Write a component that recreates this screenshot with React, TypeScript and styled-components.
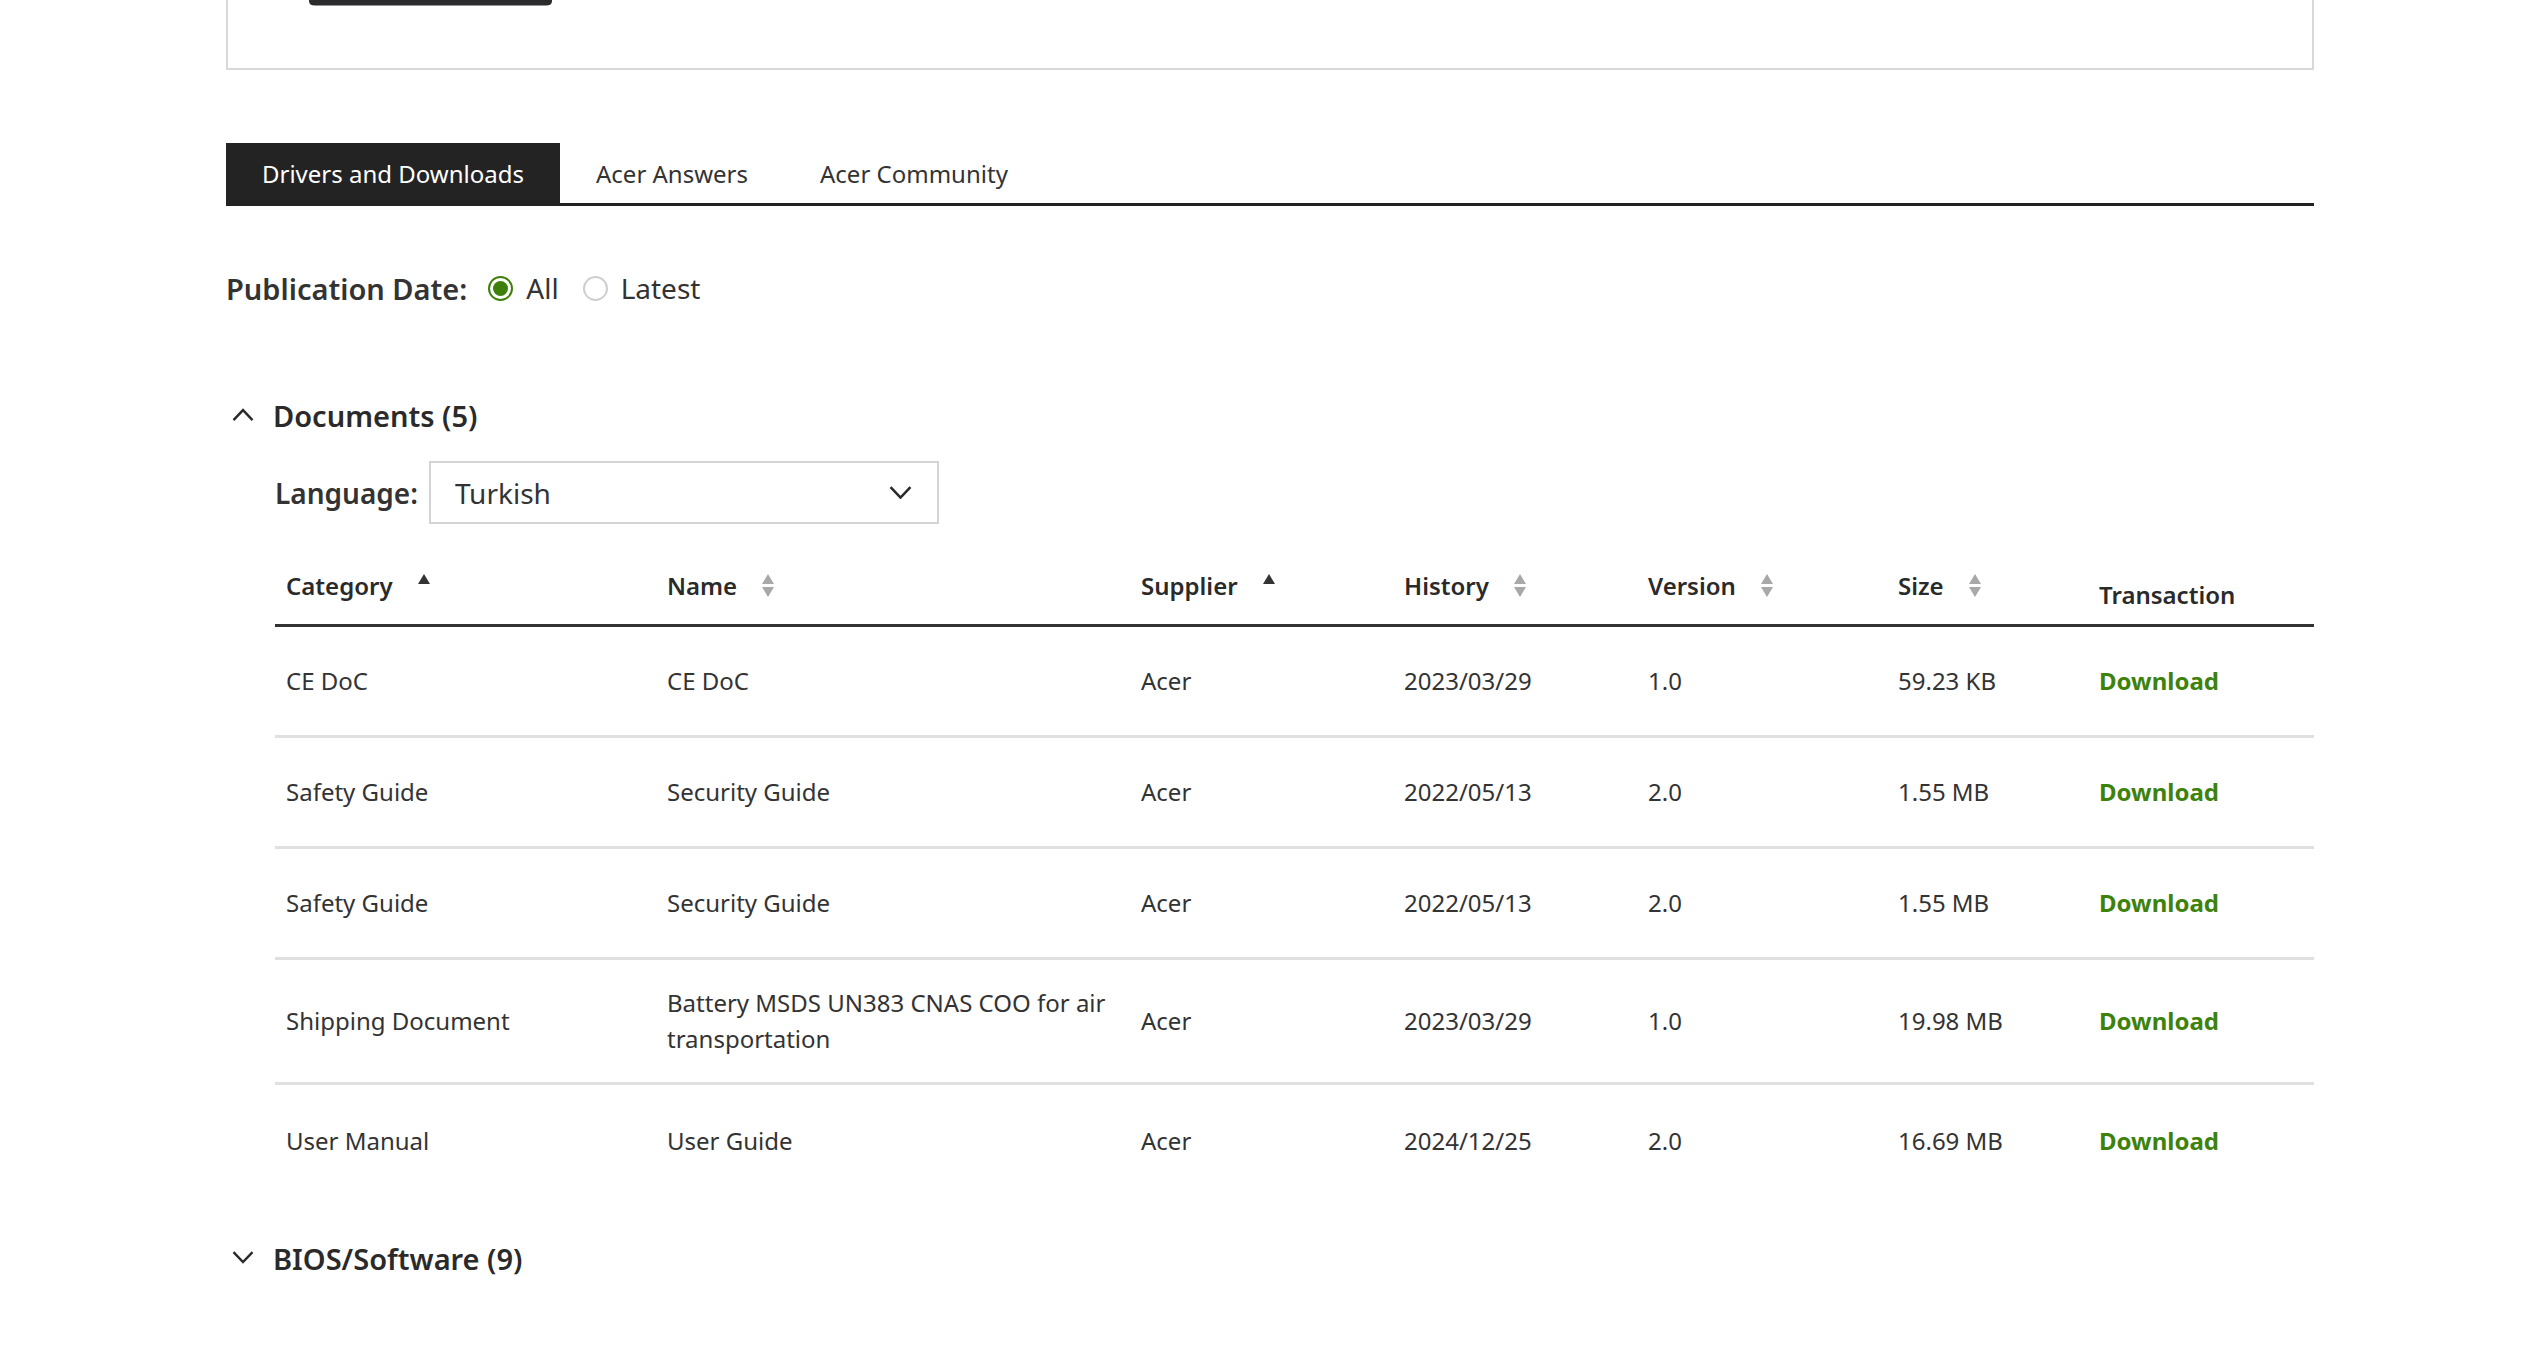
import React from "react";
import styled, { createGlobalStyle } from "styled-components";

const Global = createGlobalStyle`
  html, body { margin: 0; padding: 0; background: #fff; }
  body { font-family: "Noto Sans", "Open Sans", "Liberation Sans", sans-serif; color: #333; }
  * { box-sizing: border-box; }
`;

const Page = styled.div`
  width: 2088px;
  margin: 0 auto;
  padding-bottom: 60px;
`;

const ProductCard = styled.div`
  height: 70px;
  border: 2px solid #d9d9d9;
  border-top: none;
  padding-left: 81px;
  svg { display: block; }
`;

const Tabs = styled.div`
  display: flex;
  margin-top: 73px;
  border-bottom: 3px solid #222;
`;

const Tab = styled.div<{ $active?: boolean }>`
  height: 60px;
  padding: 0 36px;
  display: flex;
  align-items: center;
  font-size: 24px;
  background: ${(p) => (p.$active ? "#232323" : "transparent")};
  color: ${(p) => (p.$active ? "#fff" : "#333")};
`;

const FilterRow = styled.div`
  display: flex;
  align-items: center;
  height: 40px;
  margin-top: 62px;
`;

const FilterLabel = styled.span`
  font-size: 29px;
  font-weight: 600;
  margin-right: 21px;
`;

const RadioOption = styled.label`
  display: flex;
  align-items: center;
  font-size: 28px;
  margin-right: 24px;
`;

const RadioDot = styled.span<{ $checked?: boolean }>`
  width: 25px;
  height: 25px;
  border-radius: 50%;
  border: 2px solid ${(p) => (p.$checked ? "#3e7f0c" : "#cfcfcf")};
  display: inline-flex;
  align-items: center;
  justify-content: center;
  margin-right: 13px;
  &::after {
    content: "";
    width: 15px;
    height: 15px;
    border-radius: 50%;
    background: ${(p) => (p.$checked ? "#3e7f0c" : "transparent")};
  }
`;

const Section = styled.div<{ $gap: number }>`
  margin-top: ${(p) => p.$gap}px;
`;

const SectionHeader = styled.div`
  display: flex;
  align-items: center;
  height: 44px;
  gap: 19px;
  padding-left: 6px;
  font-size: 29px;
  font-weight: 600;
  color: #2a2a2a;
`;

const SectionBody = styled.div`
  padding-left: 49px;
`;

const LanguageRow = styled.div`
  display: flex;
  align-items: center;
  gap: 11px;
  margin-top: 24px;
`;

const LanguageLabel = styled.span`
  font-size: 28px;
  font-weight: 600;
`;

const Select = styled.div`
  width: 510px;
  height: 63px;
  border: 2px solid #d4d4d4;
  display: flex;
  align-items: center;
  justify-content: space-between;
  padding: 0 25px 0 24px;
  font-size: 28px;
`;

const Table = styled.div`
  margin-top: 23px;
`;

const cols = "381px 474px 263px 244px 250px 201px 225px";

const HeadRow = styled.div`
  display: grid;
  grid-template-columns: ${cols};
  height: 80px;
  border-bottom: 3px solid #333;
  align-items: end;
`;

const HeadCell = styled.div<{ $sortable?: boolean }>`
  display: flex;
  align-items: center;
  gap: 25px;
  padding: 0 11px ${(p) => (p.$sortable ? "22px" : "13px")};
  font-size: 24px;
  font-weight: 600;
  color: #2a2a2a;
`;

const Row = styled.div<{ $last?: boolean }>`
  display: grid;
  grid-template-columns: ${cols};
  min-height: 111px;
  align-items: center;
  border-bottom: ${(p) => (p.$last ? "none" : "3px solid #e0e0e0")};
`;

const Cell = styled.div`
  padding: 25px 11px;
  font-size: 24px;
  line-height: 36px;
  color: #333;
`;

const DownloadLink = styled.a`
  color: #3d820b;
  font-weight: 700;
  font-size: 24px;
  text-decoration: none;
  cursor: pointer;
`;

const SortWrap = styled.span`
  display: inline-flex;
  flex-direction: column;
  gap: 3px;
  width: 12px;
`;

type SortState = "asc" | "none";

const SortIcon = ({ state }: { state: SortState }) => (
  <SortWrap>
    <svg width="12" height="10" viewBox="0 0 12 10">
      <polygon points="6,0 12,10 0,10" fill={state === "asc" ? "#333" : "#a8a8a8"} />
    </svg>
    <svg width="12" height="10" viewBox="0 0 12 10">
      <polygon points="0,0 12,0 6,10" fill={state === "asc" ? "transparent" : "#a8a8a8"} />
    </svg>
  </SortWrap>
);

const Chevron = ({ up, size = 22 }: { up?: boolean; size?: number }) => (
  <svg width={size} height={size * 0.6} viewBox="0 0 22 13">
    <polyline
      points={up ? "1.5,12 11,2 20.5,12" : "1.5,1 11,11 20.5,1"}
      fill="none"
      stroke="#2a2a2a"
      strokeWidth="2.4"
    />
  </svg>
);

const LaptopBase = () => (
  <svg width="243" height="6" viewBox="0 0 243 6">
    <path d="M0 0 H243 V1 Q243 5.5 237 5.5 H6 Q0 5.5 0 1 Z" fill="#2b2b2e" />
  </svg>
);

const headers: { label: string; sort?: SortState }[] = [
  { label: "Category", sort: "asc" },
  { label: "Name", sort: "none" },
  { label: "Supplier", sort: "asc" },
  { label: "History", sort: "none" },
  { label: "Version", sort: "none" },
  { label: "Size", sort: "none" },
  { label: "Transaction" },
];

const rows = [
  ["CE DoC", "CE DoC", "Acer", "2023/03/29", "1.0", "59.23 KB"],
  ["Safety Guide", "Security Guide", "Acer", "2022/05/13", "2.0", "1.55 MB"],
  ["Safety Guide", "Security Guide", "Acer", "2022/05/13", "2.0", "1.55 MB"],
  ["Shipping Document", "Battery MSDS UN383 CNAS COO for air transportation", "Acer", "2023/03/29", "1.0", "19.98 MB"],
  ["User Manual", "User Guide", "Acer", "2024/12/25", "2.0", "16.69 MB"],
];

export default function App() {
  return (
    <>
      <Global />
      <Page>
        <ProductCard>
          <LaptopBase />
        </ProductCard>

        <Tabs>
          <Tab $active>Drivers and Downloads</Tab>
          <Tab>Acer Answers</Tab>
          <Tab>Acer Community</Tab>
        </Tabs>

        <FilterRow>
          <FilterLabel>Publication Date:</FilterLabel>
          <RadioOption>
            <RadioDot $checked />
            All
          </RadioOption>
          <RadioOption>
            <RadioDot />
            Latest
          </RadioOption>
        </FilterRow>

        <Section $gap={85}>
          <SectionHeader>
            <Chevron up />
            Documents (5)
          </SectionHeader>
          <SectionBody>
            <LanguageRow>
              <LanguageLabel>Language:</LanguageLabel>
              <Select>
                Turkish
                <Chevron size={23} />
              </Select>
            </LanguageRow>
            <Table>
              <HeadRow>
                {headers.map((h) => (
                  <HeadCell key={h.label} $sortable={!!h.sort}>
                    {h.label}
                    {h.sort && <SortIcon state={h.sort} />}
                  </HeadCell>
                ))}
              </HeadRow>
              {rows.map((r, i) => (
                <Row key={i} $last={i === rows.length - 1}>
                  {r.map((c, j) => (
                    <Cell key={j}>{c}</Cell>
                  ))}
                  <Cell>
                    <DownloadLink>Download</DownloadLink>
                  </Cell>
                </Row>
              ))}
            </Table>
          </SectionBody>
        </Section>

        <Section $gap={40}>
          <SectionHeader>
            <Chevron />
            BIOS/Software (9)
          </SectionHeader>
        </Section>
      </Page>
    </>
  );
}
